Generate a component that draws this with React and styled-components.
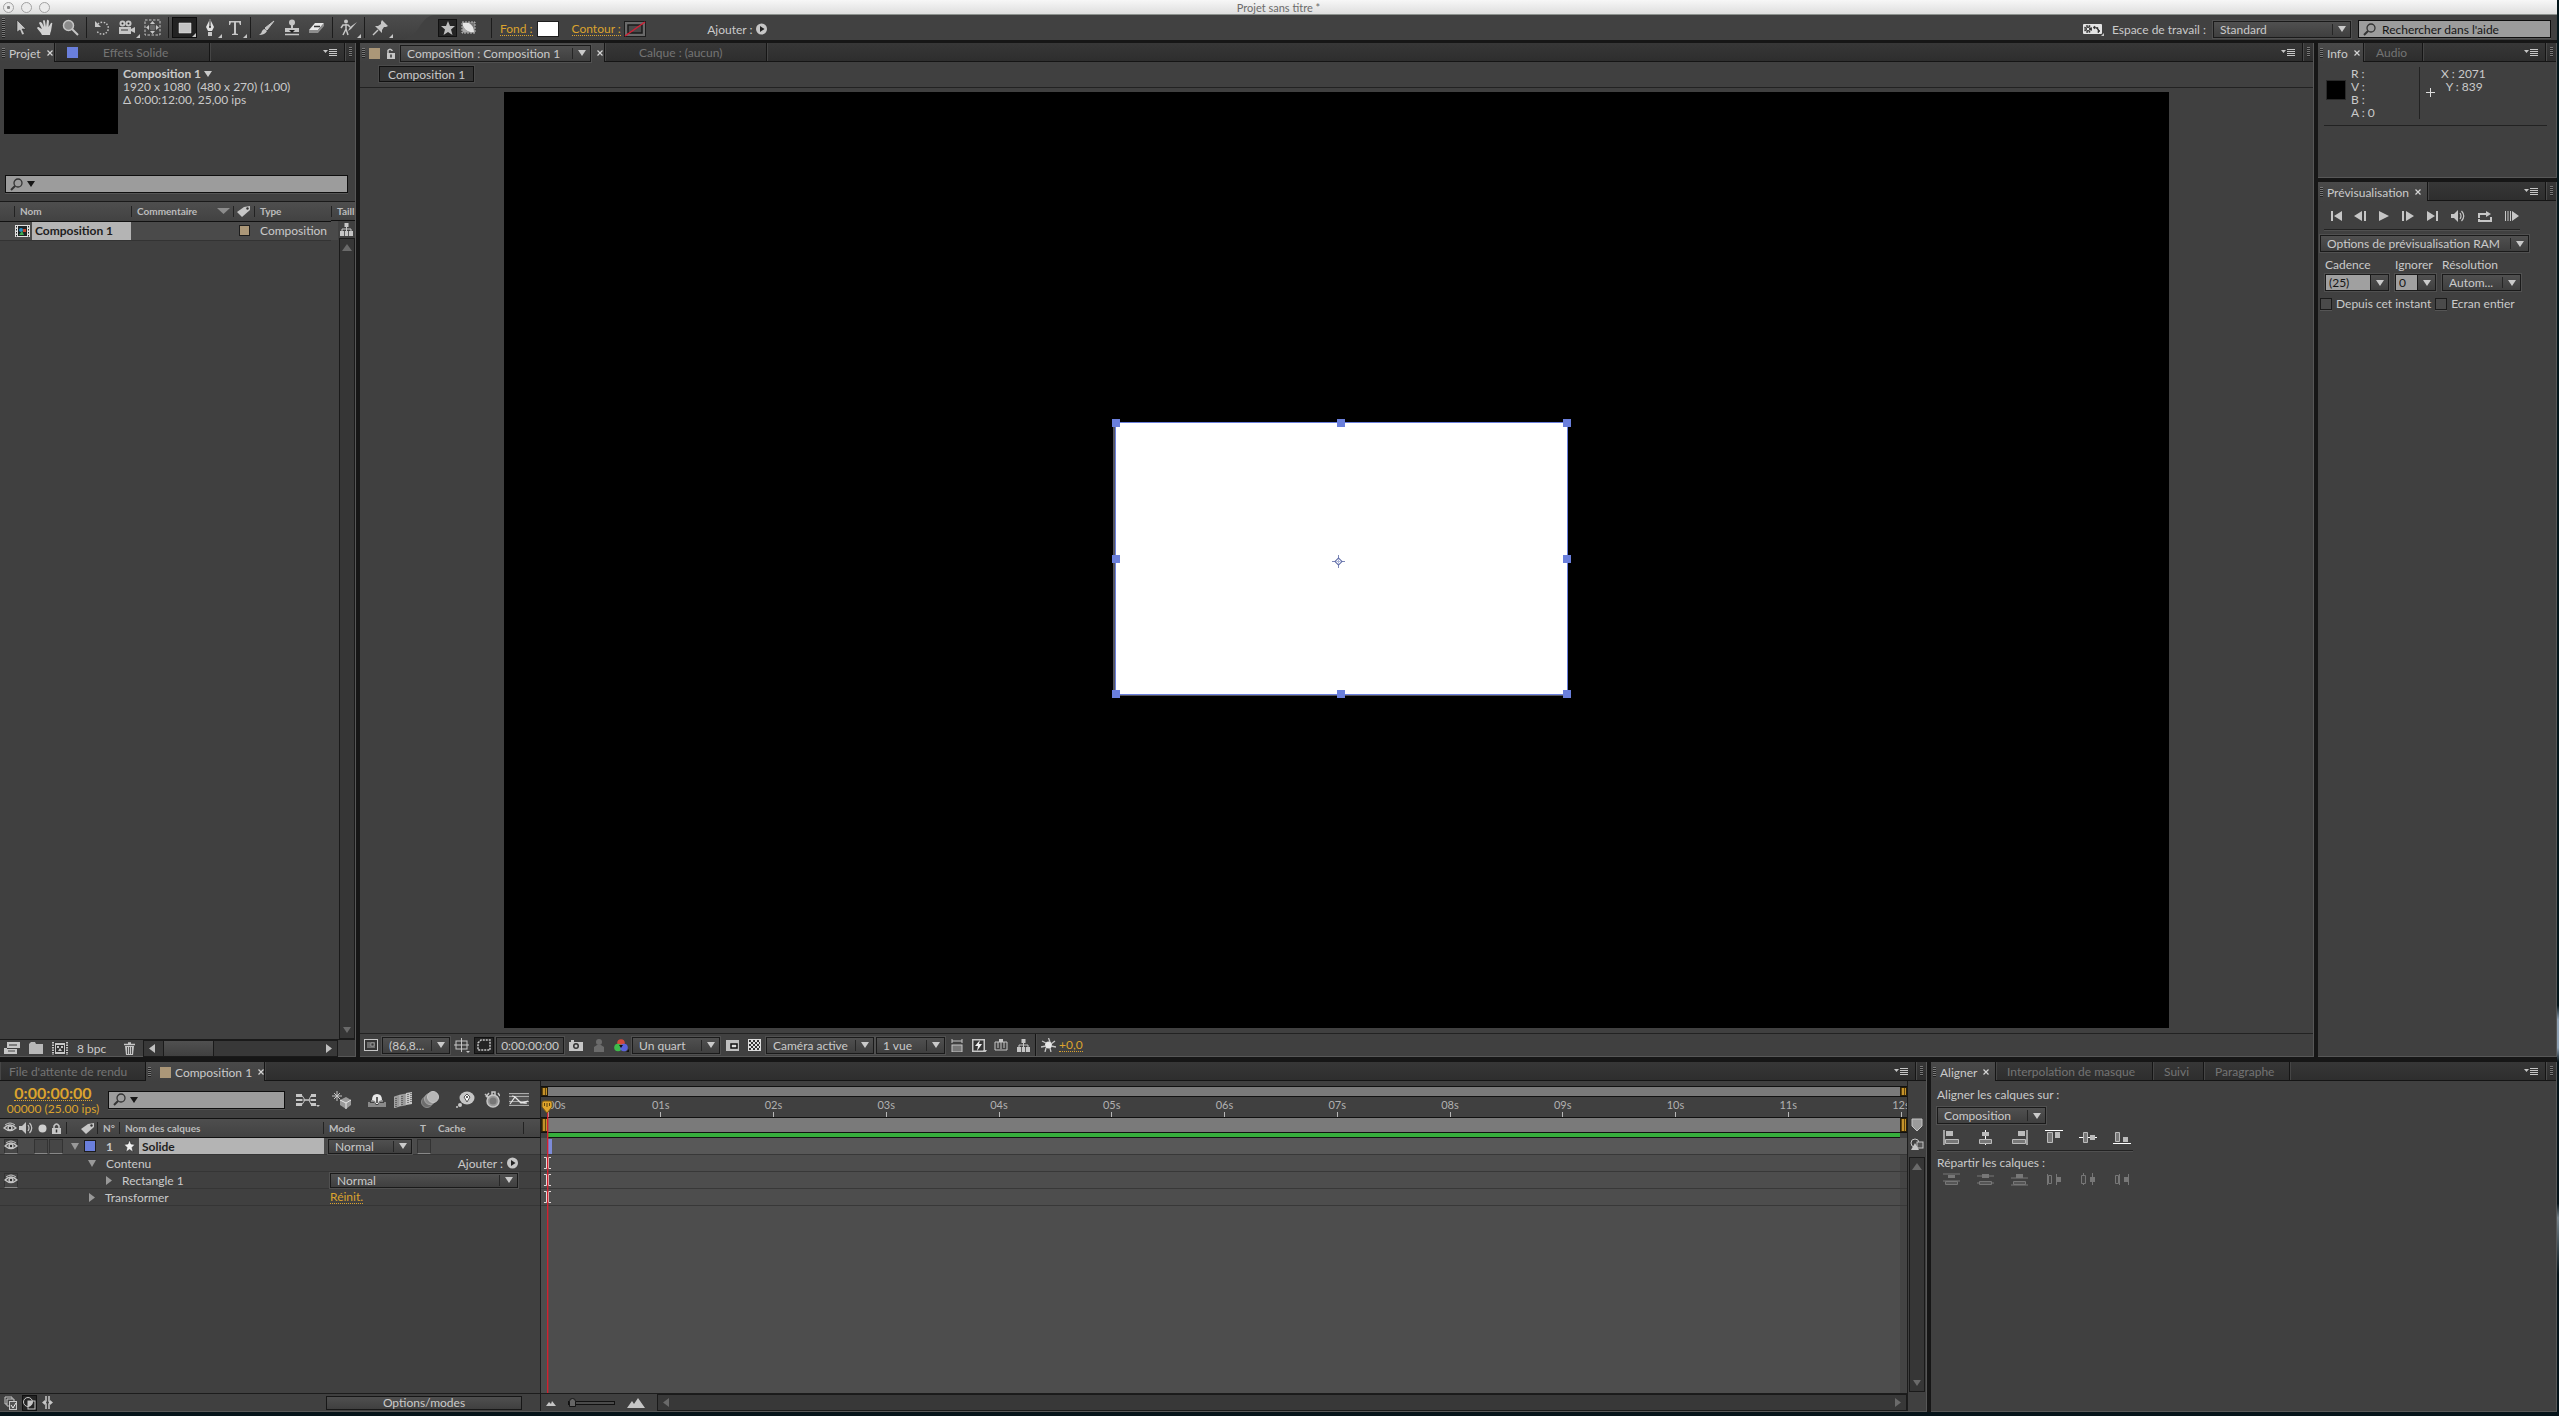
import React from 'react';
import styled, { createGlobalStyle, css } from 'styled-components';

const GlobalStyle = createGlobalStyle`
  * {
    box-sizing: border-box;
  }

  body {
    margin: 0;
    background: #05090b;
    color: #cacaca;
    font-family: Lato, 'Open Sans', sans-serif;
    font-size: 12px;
    line-height: 13px;
    overflow: hidden;
  }

  button,
  input,
  select {
    margin: 0;
    padding: 0;
    border: 0;
    border-radius: 0;
    outline: 0;
    background: none;
    color: inherit;
    font: inherit;
  }

  svg {
    display: block;
    flex: none;
  }
`;

/* ---------- icons ---------- */

const L = '#c6c6c6';
const D = '#2c2c2c';

const icons = {
  arrow: [12, 17, <path d="M2 1L11 10H7L9.500 15L7 16L5 11L2 13Z" fill={L} stroke="#222" strokeWidth=".5" />],
  hand: [17, 17, (
    <path
      d="M5 16C4 13 1 11 0 9Q1 7 3 9L5 10L2 4Q3 2 5 4L7 8L6 2Q7 0 8 2L9 8L10 1Q11 0 12 2L11.500 8L14 4Q16 3 15 6L14 12Q13 14 13 16Z"
      fill="#d2d2d2"
    />
  )],
  zoom: [17, 17, (
    <>
      <circle cx="6.500" cy="6.500" r="5" fill="#8b8b8b" stroke={L} strokeWidth="1.500" />
      <path d="M10 10L16 16" stroke={L} strokeWidth="2" />
    </>
  )],
  rotate: [17, 16, (
    <>
      <path d="M4 4A6 6 0 1 1 3 11" fill="none" stroke={L} strokeWidth="1.500" strokeDasharray="1.500 1.500" />
      <path d="M1 1V7H7Z" fill={L} />
    </>
  )],
  camera: [19, 16, (
    <>
      <circle cx="4.500" cy="3.500" r="3" fill={L} />
      <circle cx="10.500" cy="3.500" r="3" fill={L} />
      <circle cx="4.500" cy="3.500" r="1" fill={D} />
      <circle cx="10.500" cy="3.500" r="1" fill={D} />
      <path d="M1 7H13V9L17 7V13L13 11V14H1Z" fill={L} />
      <path d="M3 10H10" stroke="#666" strokeWidth="1.500" />
    </>
  )],
  panBehind: [17, 17, (
    <>
      <rect x="1" y="1" width="15" height="15" fill="none" stroke={L} strokeDasharray="2.500 1.500" />
      <circle cx="8.500" cy="8.500" r="3" fill="#666" />
      <path d="M8.500 2L11 5H6ZM8.500 15L11 12H6ZM2 8.500L5 6V11ZM15 8.500L12 6V11Z" fill={L} />
    </>
  )],
  rect: [14, 12, <path d="M1 1H13V11H1Z" fill="#c4c4c4" stroke="#eee" strokeWidth=".5" />],
  pen: [12, 17, (
    <>
      <path d="M6 0L10 8L8 12H4L2 8Z" fill="#e0e0e0" />
      <path d="M6 1V8" stroke={D} />
      <circle cx="6" cy="8" r="1" fill={D} />
      <path d="M4 13H8V17H4Z" fill={L} />
    </>
  )],
  type: [14, 16, <path d="M1 1H13V5H12L11 2.500H8V13.500L10 14V15H4V14L6 13.500V2.500H3L2 5H1Z" fill={L} />],
  brush: [17, 16, (
    <>
      <path d="M16 1L9 10L7 8Z" fill={L} stroke={L} />
      <path d="M7 9L9 11Q7 15 1 15Q4 13 4 11Q5 9 7 9Z" fill={L} />
    </>
  )],
  stamp: [16, 17, (
    <>
      <circle cx="8" cy="3.500" r="3" fill={L} />
      <path d="M7 6H9V9H7ZM1 9H15V13H1Z" fill={L} />
      <path d="M5 11H11L8 14Z" fill="#222" />
      <path d="M1 15.500H15" stroke={L} strokeWidth="1.500" />
    </>
  )],
  eraser: [17, 13, (
    <>
      <path d="M7 2H16L10 9H1Z" fill="#e8e8e8" />
      <path d="M1 9H10V12H1ZM10 9L16 2V5L10 12Z" fill="#8d8d8d" />
      <path d="M6 5.500H12" stroke="#333" strokeWidth="1.500" />
    </>
  )],
  roto: [19, 17, (
    <>
      <circle cx="7" cy="2.500" r="2" fill={L} />
      <path d="M7 5V10L9 16M7 10L4 16M2 9L4 6H9L11 8" fill="none" stroke={L} strokeWidth="1.500" />
      <path d="M18 3L12 10L9 12L11 8Z" fill={L} />
    </>
  )],
  pin: [17, 17, (
    <>
      <path d="M10 1L16 7L14 8L12 8L10 11V14L3 7H6L9 5V3Z" fill={L} />
      <path d="M6 11L1 16" stroke={L} strokeWidth="1.500" />
    </>
  )],
  star: [14, 14, <path d="M7 0L9 5L14 5L10 8.500L11.500 14L7 11L2.500 14L4 8.500L0 5L5 5Z" fill="#bdbdbd" />],
  maskMode: [15, 13, (
    <>
      <rect x="1" y="1" width="13" height="11" fill="#777" stroke="#bbb" strokeDasharray="2 1" />
      <path d="M2 2H8Q13 5 13 11Q5 12 2 5Z" fill="#e6e6e6" />
      <path d="M2 11V5Q4 10 9 11Z" fill="#aaa" />
    </>
  )],
  noStroke: [22, 16, (
    <>
      <rect x=".5" y=".5" width="21" height="15" fill="#6a6a6a" stroke="#1d1d1d" />
      <rect x="4" y="4" width="14" height="8" fill="#4a4a4a" stroke="#1a1a1a" strokeWidth="1.500" />
      <path d="M1 15L21 1" stroke="#d21f35" strokeWidth="1.500" />
    </>
  )],
  playCircle: [11, 12, (
    <>
      <circle cx="5.500" cy="6" r="5.500" fill={L} />
      <path d="M4 3L8.500 6L4 9Z" fill="#222" />
    </>
  )],
  gears: [22, 15, (
    <>
      <rect x="0" y="2" width="19" height="10" rx="1" fill="#e4e4e4" />
      <circle cx="5" cy="7" r="3" fill="none" stroke="#333" strokeWidth="2" strokeDasharray="1.500 .9" />
      <circle cx="5" cy="7" r="1.800" fill="none" stroke="#333" />
      <path d="M10 5.500L12 4V7ZM12 5.500H15V8M17 9L15 11V7Z" fill="#333" stroke="#333" strokeWidth=".6" />
      <path d="M18 14L21 14V11Z" fill={L} />
    </>
  )],
  loupe: [13, 13, (
    <>
      <circle cx="8" cy="5" r="4" fill="none" stroke="#333" strokeWidth="1.300" />
      <path d="M5 8L1 12" stroke="#333" strokeWidth="2" />
    </>
  )],
  down: [8, 6, <path d="M0 0H8L4 6Z" fill="currentColor" />],
  sort: [13, 6, <path d="M0 0H13L6.500 6Z" fill="#8c8c8c" />],
  up: [10, 7, <path d="M0 7H10L5 0Z" fill="currentColor" />],
  right: [6, 9, <path d="M0 0L6 4.500L0 9Z" fill="currentColor" />],
  left: [6, 9, <path d="M6 0L0 4.500L6 9Z" fill="currentColor" />],
  close: [6, 6, <path d="M.5 .5L5.500 5.500M5.500 .5L.5 5.500" stroke="#d5d5d5" strokeWidth="1.200" />],
  menu: [14, 9, (
    <>
      <path d="M0 2H5L2.500 5Z" fill={L} />
      <path d="M6 1.500H14M6 3.500H14M6 5.500H14M6 7.500H14" stroke={L} />
    </>
  )],
  lock: [9, 11, (
    <>
      <path d="M2 6V2.500Q4 0 6 2.500V3" fill="none" stroke={L} strokeWidth="1.500" />
      <rect x="1" y="5" width="8" height="6" fill={L} />
      <path d="M5 6.500V9.500" stroke="#333" strokeWidth="1.500" />
    </>
  )],
  padlock: [9, 11, (
    <>
      <path d="M2 5V3Q4.500-1 7 3V5" fill="none" stroke={L} strokeWidth="1.500" />
      <rect x="0" y="5" width="9" height="6" fill={L} />
      <path d="M4.500 6.500V9.500" stroke="#333" strokeWidth="1.500" />
    </>
  )],
  tag: [15, 13, (
    <>
      <path d="M1 7L8 2L14 1V5L6 12Z" fill={L} />
      <circle cx="11.500" cy="3.500" r="1.200" fill="#333" />
    </>
  )],
  comp: [15, 12, (
    <>
      <rect width="15" height="12" fill="#e0e0e0" />
      <path d="M1.500 1V12M13.500 1V12" stroke="#222" strokeDasharray="1.500 1.500" />
      <rect x="3" y="1" width="9" height="10" fill="#1e2426" />
      <circle cx="6" cy="5" r="2" fill="#2d8fc4" />
      <rect x="8" y="4" width="3" height="3" fill="#c4472d" />
      <path d="M4 10L7 6L9 10Z" fill="#3cab4f" />
    </>
  )],
  tree: [13, 13, (
    <>
      <path d="M4.500 0H8.500V4H4.500ZM0 8H4V13H0ZM4.800 8H8.200V13H4.800ZM9 8H13V13H9Z" fill={L} />
      <path d="M6.500 4V8M2 8V6H11V8" fill="none" stroke={L} />
    </>
  )],
  footage: [17, 13, (
    <>
      <path d="M4 0H17V6H4Z" fill={L} />
      <path d="M6 3H14" stroke="#333" />
      <path d="M1 6H4V12H1ZM3 7H14V12H3Z" fill={L} />
      <path d="M5 9H12" stroke="#444" />
    </>
  )],
  folder: [14, 12, <path d="M0 2L2 0H6L7 2H14V12H0Z" fill="#b8b8b8" />],
  newComp: [16, 13, (
    <>
      <rect width="16" height="13" fill="#333" />
      <path d="M1 0V13M15 0V13" stroke={L} strokeWidth="2" strokeDasharray="1.500 1" />
      <rect x="3" y="1" width="10" height="11" fill={L} />
      <rect x="4" y="3" width="8" height="7" fill="#333" />
      <path d="M5 4H7V6H5ZM9 4H11V6H9ZM6 9L8 6L10 9Z" fill={L} />
    </>
  )],
  trash: [11, 13, (
    <>
      <path d="M0 2.500H11M4 1H7" stroke={L} strokeWidth="1.500" />
      <path d="M1 4H10L9 13H2Z" fill={L} />
      <path d="M3.500 5V12M5.500 5V12M7.500 5V12" stroke="#555" />
    </>
  )],
  magFit: [14, 12, (
    <>
      <rect x=".5" y=".5" width="13" height="11" fill="#333" stroke={L} />
      <path d="M3 3H11V9H3Z" fill="#6d6d6d" />
      <path d="M7 4H10V7H7Z" fill="#333" stroke={L} strokeWidth=".5" />
    </>
  )],
  guides: [16, 15, (
    <>
      <rect x="2" y="3" width="11" height="8" fill="none" stroke={L} />
      <path d="M7.500 0V14M0 7H15" stroke={L} />
      <path d="M12 13H16L14 15Z" fill={L} />
    </>
  )],
  maskView: [14, 12, <path d="M1 4L4 1H13V11H1Z" fill="none" stroke={L} strokeWidth="1.500" strokeDasharray="2 1" />],
  snapshot: [14, 11, (
    <>
      <path d="M0 2H2V0H5V2H14V11H0Z" fill={L} />
      <circle cx="7" cy="6" r="3" fill="#333" />
      <circle cx="7" cy="6" r="1.500" fill={L} />
    </>
  )],
  person: [10, 13, (
    <>
      <circle cx="5" cy="3" r="3" fill="#6b6b6b" />
      <path d="M0 13V8L3 6H7L10 8V13Z" fill="#6b6b6b" />
    </>
  )],
  rgb: [15, 13, (
    <>
      <circle cx="7" cy="4" r="3.800" fill="#d14a3e" />
      <circle cx="4" cy="8.500" r="3.800" fill="#3dbb4a" />
      <circle cx="10" cy="8.500" r="3.800" fill="#5a62dc" />
      <path d="M5 6H9L7 9Z" fill="#111" />
      <path d="M12 13L15 13V10Z" fill="#111" />
    </>
  )],
  roi: [13, 11, (
    <>
      <rect width="13" height="11" fill="#c0c0c0" />
      <rect x="5" y="4" width="6" height="4" fill="#ddd" stroke="#111" strokeWidth="1.500" />
    </>
  )],
  checker: [13, 12, (
    <>
      <rect width="13" height="12" fill="#ddd" />
      <path d="M1 2H12M1 6H12M1 10H12" stroke="#333" strokeWidth="2" strokeDasharray="2 2" />
      <path d="M3 4H12M3 8H12" stroke="#333" strokeWidth="2" strokeDasharray="2 2" />
    </>
  )],
  aspect: [12, 13, (
    <>
      <path d="M1 0V4M11 0V4M1 2H11" stroke={L} />
      <rect x="1" y="6" width="10" height="7" fill="#777" stroke={L} />
    </>
  )],
  fast: [15, 13, (
    <>
      <rect width="13" height="13" fill={L} />
      <rect x="1.500" y="1.500" width="10" height="10" fill="#333" />
      <path d="M8 1L3 7H6L5 12L10 5H7Z" fill="#eee" />
      <path d="M11 11H15L13 14Z" fill={L} />
    </>
  )],
  timelineIcon: [14, 12, (
    <>
      <path d="M1 11V3H13V11H1M4 3V9M7 1V10M10 3V9" fill="none" stroke={L} />
      <path d="M5 0H9V3H5Z" fill={L} />
    </>
  )],
  exposure: [15, 14, (
    <>
      <circle cx="7.500" cy="7" r="3.500" fill="#e8e8e8" />
      <path d="M7.500 0L9 4M14 3L10 6M15 9L10 8M10 14L9 10M4 14L5 10M0 9L5 8M1 3L5 5" stroke={L} strokeWidth="1.300" />
    </>
  )],
  first: [11, 10, <path d="M0 0H2V10H0ZM11 0V10L3 5Z" fill={L} />],
  prev: [12, 10, <path d="M8 0V10L0 5ZM10 0H12V10H10Z" fill={L} />],
  play: [10, 10, <path d="M0 0L10 5L0 10Z" fill={L} />],
  next: [12, 10, <path d="M0 0H2V10H0ZM4 0L12 5L4 10Z" fill={L} />],
  last: [11, 10, <path d="M0 0L8 5L0 10ZM9 0H11V10H9Z" fill={L} />],
  speaker: [14, 12, (
    <>
      <path d="M0 4H3L7 0V12L3 8H0Z" fill={L} />
      <path d="M9 3Q11 6 9 9M10.500 1Q15 6 10.500 11" fill="none" stroke={L} strokeWidth="1.200" />
    </>
  )],
  loop: [14, 11, (
    <>
      <path d="M1 7V3H9M13 6V10H1V8" fill="none" stroke={L} strokeWidth="2" />
      <path d="M8 0L13 3L8 6Z" fill={L} />
    </>
  )],
  ram: [14, 10, <path d="M0 0H1V10H0ZM2.500 0H3.500V10H2.500ZM5 0H6V10H5ZM7 0L14 5L7 10Z" fill={L} />],
  eye: [14, 12, (
    <>
      <path d="M1 6Q7 0 13 6Q7 11 1 6Z" fill="none" stroke={L} strokeWidth="1.300" />
      <path d="M2 3Q7-1 12 3" fill="none" stroke={L} />
      <circle cx="7" cy="6" r="2.600" fill={L} />
      <circle cx="7" cy="6" r="1.200" fill={D} />
    </>
  )],
  dot: [9, 9, <circle cx="4.500" cy="4.500" r="4" fill="#d0d0d0" />],
  flowchart: [24, 14, (
    <>
      <path d="M0 1H6V4H0ZM0 6H6V8H0ZM0 10H6V13H0ZM15 1H20V4H15ZM15 6H20V8H15ZM15 10H20V13H15Z" fill={L} />
      <path d="M6 2.500L9 7H13L15 2.500M6 7H15M6 11.500L9 7M13 7L15 11.500" fill="none" stroke={L} />
      <path d="M20 12H24L22 14Z" fill={L} />
    </>
  )],
  draft3d: [20, 18, (
    <>
      <path d="M5 0V10M0 5H10M2 2L8 8M8 2L2 8" stroke={L} />
      <path d="M8 9L14 6L19 9V14L14 18L8 14Z" fill="#9a9a9a" />
      <path d="M8 9L14 12L19 9M14 12V18" stroke="#e5e5e5" fill="none" />
    </>
  )],
  shy: [18, 14, (
    <>
      <path d="M0 7H18V14H0Z" fill="#8a8a8a" />
      <path d="M0 7H3V9H6L8 12H10L12 9H15V7H18V9H16V10H2V9H0Z" fill="#444" />
      <path d="M4 7Q4 1 9 1Q14 1 14 7L11 8L10 11H8L7 8Z" fill="#e8e8e8" />
      <path d="M9 4V10" stroke="#333" strokeWidth="1.500" />
    </>
  )],
  blend: [19, 16, (
    <>
      <path d="M0 5L6 3V14L0 16ZM6 3L12 2V13L6 14Z" fill="#999" stroke={L} strokeWidth=".5" />
      <path d="M12 1L18 0V12L12 13Z" fill={L} />
      <path d="M2 6V15M8 4V13M14 2V12M17 1V11" stroke="#333" strokeDasharray="1 1" />
    </>
  )],
  blur: [18, 17, (
    <>
      <circle cx="6" cy="11" r="5.500" fill="#6d6d6d" stroke="#8a8a8a" />
      <circle cx="9" cy="8" r="5.500" fill="#8d8d8d" stroke="#a8a8a8" />
      <circle cx="12" cy="6" r="5.500" fill="#b6b6b6" stroke={L} />
    </>
  )],
  brain: [20, 17, (
    <>
      <ellipse cx="12" cy="7" rx="7.500" ry="6.500" fill={L} />
      <circle cx="5" cy="14" r="2" fill={L} />
      <circle cx="2" cy="16" r="1" fill={L} />
      <path d="M12 3L15 6L12 11L9 6Z" fill="#fff" stroke="#555" />
      <circle cx="12" cy="6" r="1" fill="#333" />
    </>
  )],
  stopwatch: [16, 17, (
    <>
      <circle cx="9" cy="10" r="6" fill="#999" stroke={L} strokeWidth="1.500" />
      <circle cx="9" cy="10" r="3.500" fill="#777" />
      <path d="M8 4V1H11V4M1 3L5 7M5 2L2 6M14 2L16 5" stroke={L} strokeWidth="1.500" fill="none" />
    </>
  )],
  graph: [20, 15, (
    <>
      <rect x="0" y="1" width="20" height="13" fill="#555" />
      <path d="M0 1.500H20M0 13.500H20M0 4.500H20M0 9.500H20" stroke="#aaa" />
      <path d="M1 12L6 5L12 11L19 9M3 4Q6 4 9 8T18 11" fill="none" stroke="#e6e6e6" strokeWidth="1.200" />
    </>
  )],
  twirlOpen: [8, 7, <path d="M0 0H8L4 7Z" fill="#999" />],
  twirl: [6, 9, <path d="M0 0L6 4.500L0 9Z" fill="#999" />],
  starSmall: [11, 12, <path d="M5.500 0L7 4L11 4.500L8 7.500L9 12L5.500 9.500L2 12L3 7.500L0 4.500L4 4Z" fill="#eee" stroke="#222" strokeWidth=".5" />],
  ibeam: [7, 12, <path d="M0 .5H2.500V11.500H0M7 .5H4.500V11.500H7" fill="none" stroke="#e3d9d9" />],
  marker: [12, 14, <path d="M1 1H11V8L6 13L1 8Z" fill="#9b9b9b" stroke="#c4c4c4" />],
  compButton: [14, 13, (
    <>
      <circle cx="5" cy="5" r="4" fill="none" stroke={L} />
      <rect x="7" y="4" width="6" height="6" fill="#555" stroke={L} />
      <path d="M1 12L5 5L9 12Z" fill={L} />
    </>
  )],
  layersSwitch: [13, 14, (
    <>
      <path d="M1 1H8V3M1 1V8H3M3 3H10V5M3 3V10H5" fill="none" stroke={L} />
      <rect x="5.500" y="5.500" width="7" height="8" fill="#555" stroke={L} />
      <path d="M7 9L9 12L12 7" fill="none" stroke="#eee" />
    </>
  )],
  modesSwitch: [13, 14, (
    <>
      <circle cx="5" cy="6" r="4.500" fill="none" stroke={L} />
      <rect x="5" y="5" width="7" height="8" fill="none" stroke={L} />
      <path d="M5 5H9Q10 8 7 10H5Z" fill={L} />
    </>
  )],
  braces: [11, 13, (
    <>
      <path d="M4 0V5L3 6.500L4 8V13M7 0V5L8 6.500L7 8V13" fill="none" stroke={L} strokeWidth="1.500" />
      <path d="M0 6.500L3 4V9ZM11 6.500L8 4V9Z" fill={L} />
    </>
  )],
  hillSmall: [10, 6, <path d="M0 6L3 2L5 4L6 1L10 6Z" fill={L} />],
  hillBig: [18, 10, <path d="M0 10L5 3L7 6L11 0L18 10Z" fill={L} />],
};

const alignShapes = {
  left: (<><path d="M1 0V15" stroke="#fff" /><path d="M3 1H10V6H3Z" fill="#bbb" /><path d="M2.500 9.500H15.500V13.500H2.500Z" fill="#777" stroke="#bbb" /></>),
  centerH: (<><path d="M8.500 0V15" stroke="#fff" /><path d="M5 2H12V6H5Z" fill="#bbb" /><path d="M2.500 9.500H14.500V13.500H2.500Z" fill="#777" stroke="#bbb" /></>),
  right: (<><path d="M16 0V15" stroke="#fff" /><path d="M7 1H14V6H7Z" fill="#bbb" /><path d="M1.500 9.500H14.500V13.500H1.500Z" fill="#777" stroke="#bbb" /></>),
  top: (<><path d="M0 .5H18" stroke="#fff" /><path d="M2.500 2.500H7.500V12.500H2.500Z" fill="#777" stroke="#bbb" /><path d="M10 2H15V8H10Z" fill="#bbb" /></>),
  centerV: (<><path d="M0 7.500H18" stroke="#fff" /><path d="M4.500 2.500H8.500V12.500H4.500Z" fill="#777" stroke="#bbb" /><path d="M11 5H16V10H11Z" fill="#bbb" /></>),
  bottom: (<><path d="M0 13.500H18" stroke="#fff" /><path d="M2.500 2.500H6.500V11.500H2.500Z" fill="#777" stroke="#bbb" /><path d="M10 7H15V12H10Z" fill="#bbb" /></>),
};

const spreadShapes = {
  top: (<><path d="M0 1H17M0 8H17" stroke="#777" /><path d="M5 2H12V5H5Z" fill="#777" /><path d="M2.500 8.500H14.500V11.500H2.500Z" fill="#555" stroke="#777" /></>),
  middle: (<><path d="M0 3H17M0 10H17" stroke="#777" /><path d="M5 1H12V5H5Z" fill="#777" /><path d="M2.500 8.500H14.500V11.500H2.500Z" fill="#555" stroke="#777" /></>),
  bottom: (<><path d="M0 5H17M0 12H17" stroke="#777" /><path d="M5 1H12V5H5Z" fill="#777" /><path d="M2.500 8.500H14.500V11.500H2.500Z" fill="#555" stroke="#777" /></>),
  left: (<><path d="M2.500 1V12M11.500 1V12" stroke="#777" /><path d="M3.500 2.500H6.500V10.500H3.500Z" fill="#444" stroke="#777" /><path d="M12 4H16V9H12Z" fill="#777" /></>),
  center: (<><path d="M4.500 0V12M13.500 0V12" stroke="#777" /><path d="M2.500 2.500H6.500V10.500H2.500Z" fill="#444" stroke="#777" /><path d="M11 4H16V9H11Z" fill="#777" /></>),
  right: (<><path d="M6.500 1V12M15.500 1V12" stroke="#777" /><path d="M2.500 2.500H5.500V10.500H2.500Z" fill="#444" stroke="#777" /><path d="M11 4H15V9H11Z" fill="#777" /></>),
};

const Icon = ({ name }) => {
  const [w, h, art] = icons[name];
  return (
    <svg width={w} height={h} viewBox={`0 0 ${w} ${h}`} aria-hidden='true'>
      {art}
    </svg>
  );
};

/* ---------- shared parts ---------- */

const Row = styled.div`
  display: flex;
  align-items: center;
  gap: ${(props) => props.$gap || 0}px;
`;

const Spacer = styled.div`
  flex: 1;
`;

const Gap = styled.span`
  flex: none;
  width: ${(props) => props.$w || 1}px;
`;

const Swatch = styled.span`
  flex: none;
  width: ${(props) => props.$size || 11}px;
  height: ${(props) => props.$size || 11}px;
  background: ${(props) => props.$color};
  border: ${(props) => (props.$framed ? '1px solid #1d1d1d' : 'none')};
`;

const Grip = styled.span`
  flex: none;
  width: 3px;
  height: ${(props) => props.$tall || 10}px;
  background: repeating-linear-gradient(#7a7a7a 0 1px, #222 1px 2px);
`;

const IconButton = styled.button`
  display: flex;
  align-items: center;
  justify-content: center;
  flex: none;
  width: ${(props) => props.$w || 16}px;
  height: ${(props) => props.$h || 17}px;

  ${(props) =>
    props.$active &&
    css`
      background: #242424;
      border: 1px solid #111;
    `}
`;

const Panel = styled.section`
  display: flex;
  flex-direction: column;
  min-width: 0;
  min-height: 0;
  background: #404040;
  border-right: 1px solid #575757;
  border-bottom: 1px solid #575757;
`;

const TabBar = styled.div`
  display: flex;
  flex: none;
  height: 19px;
  background: linear-gradient(#373737, #2d2d2d);
`;

const Tab = styled.div`
  display: flex;
  align-items: center;
  gap: ${(props) => props.$gap || 4}px;
  flex: none;
  width: ${(props) => props.$w}px;
  padding: 1px 4px 0 ${(props) => props.$pad || 2}px;
  white-space: nowrap;
  border-right: 1px solid #151515;

  ${(props) =>
    props.$active
      ? css`
          background: linear-gradient(#4a4a4a, #404040);
        `
      : css`
          color: #747474;
          border-bottom: 1px solid #151515;
          box-shadow: inset 1px 0 #454545;
        `}
`;

const TabFill = styled.div`
  display: flex;
  flex: 1;
  align-items: center;
  justify-content: flex-end;
  gap: 3px;
  padding-right: 3px;
  border-bottom: 1px solid #151515;
  box-shadow: inset 1px 0 #454545;

  & button {
    margin-right: 4px;
  }
`;

const TabSplit = styled.span`
  width: 2px;
  height: 100%;
  background: linear-gradient(90deg, #151515 50%, #4a4a4a 50%);
`;

const PanelMenu = () => (
  <TabFill>
    <IconButton $w={14} $h={14} aria-label='Menu du panneau'>
      <Icon name='menu' />
    </IconButton>
    <TabSplit />
    <Grip />
  </TabFill>
);

const CloseButton = () => (
  <IconButton $w={10} $h={12} aria-label='Fermer'>
    <Icon name='close' />
  </IconButton>
);

const SelectBox = styled.div`
  display: grid;
  flex: none;
  width: ${(props) => props.$w}px;
  height: ${(props) => props.$h || 17}px;
  background: linear-gradient(#505050, #3f3f3f);
  border: 1px solid #1a1a1a;
  box-shadow: 0 0 0 1px #505050;

  & select {
    grid-area: 1 / 1;
    width: 100%;
    padding: 0 18px 0 6px;
    appearance: none;
    text-overflow: ellipsis;
  }
`;

const SelectArrow = styled.span`
  grid-area: 1 / 1;
  justify-self: end;
  align-self: center;
  display: flex;
  align-items: center;
  justify-content: center;
  width: 18px;
  height: 11px;
  border-left: 1px solid #262626;
  pointer-events: none;
`;

const Dropdown = ({ label, value, w, h }) => (
  <SelectBox $w={w} $h={h}>
    <select aria-label={label} defaultValue={value}>
      <option>{value}</option>
    </select>
    <SelectArrow>
      <Icon name='down' />
    </SelectArrow>
  </SelectBox>
);

const ComboBox = styled.div`
  display: flex;
  width: ${(props) => props.$w}px;
  height: 17px;
  border: 1px solid #1a1a1a;
  background: linear-gradient(#505050, #3f3f3f);
  box-shadow: 0 0 0 1px #505050;

  & input {
    flex: 1;
    min-width: 0;
    padding-left: 3px;
    background: #a0a0a0;
    color: #151515;
    border-right: 1px solid #1a1a1a;
  }
`;

const SearchBox = styled.div`
  display: flex;
  align-items: center;
  gap: 4px;
  flex: ${(props) => (props.$w ? 'none' : 1)};
  width: ${(props) => (props.$w ? `${props.$w}px` : 'auto')};
  height: 18px;
  padding-left: 4px;
  background: #9c9c9c;
  border: 1px solid #0e0e0e;
  box-shadow: 0 1px #555;
  color: #161616;

  & input {
    flex: 1;
    min-width: 0;
    padding-left: 2px;
  }

  & input::placeholder {
    color: #161616;
    opacity: 1;
  }
`;

const HotText = styled.button`
  color: #dba32e;
  border-bottom: 1px dotted #dba32e;
  white-space: nowrap;
`;

const HairLine = styled.hr`
  width: ${(props) => props.$w}px;
  max-width: 100%;
  margin: ${(props) => props.$m || '0'};
  border: 0;
  border-top: 1px solid #222;
  border-bottom: 1px solid #505050;
`;

/* ---------- window ---------- */

const Desktop = styled.div`
  height: 100vh;
  padding: 0 2px 4px 0;
  background: linear-gradient(#04161b 71%, #8da0b3 72% 74%, #06141a 75% 85%, #76848c 86%, #06141a 90%);
`;

const Window = styled.div`
  display: flex;
  flex-direction: column;
  height: 100%;
  background: #161616;
`;

const TitleBar = styled.header`
  display: grid;
  grid-template-columns: 1fr auto 1fr;
  align-items: center;
  flex: none;
  height: 15px;
  padding: 0 3px;
  background: linear-gradient(#f7f7f7, #dedede);
  border-bottom: 1px solid #8c918d;
  color: #6b6b6b;
  font-size: 11px;
`;

const Light = styled.button`
  width: 11px;
  height: 11px;
  border: 1px solid #a2a2a2;
  border-radius: 50%;
  background: ${(props) => (props.$edited ? 'radial-gradient(#888 20%, #ececec 30%)' : '#ececec')};
`;

const Toolbar = styled.div`
  display: flex;
  align-items: center;
  flex: none;
  height: 25px;
  margin-bottom: 3px;
  padding-right: 6px;
  background: #414141;
`;

const ToolGroup = styled.div`
  display: flex;
  align-items: center;
  height: 100%;
  padding-left: 2px;
  background: linear-gradient(#4c4c4c, #3f3f3f);
`;

const ToolSet = styled.div`
  display: flex;
  align-items: center;
  height: 21px;
  border-left: ${(props) => (props.$first ? 'none' : '1px solid #1c1c1c')};
  padding: 0 3px;
`;

const Tool = styled.button`
  display: grid;
  place-items: center;
  width: 25px;
  height: 21px;
  background: ${(props) => (props.$active ? '#222' : 'none')};
  border: ${(props) => (props.$active ? '1px solid #0d0d0d' : 'none')};

  & > * {
    grid-area: 1 / 1;
  }
`;

const Corner = styled.span`
  place-self: end;
  width: 0;
  height: 0;
  border-left: 4px solid transparent;
  border-bottom: 4px solid #c6c6c6;
`;

const ShapeOptions = styled.div`
  display: flex;
  align-items: center;
  gap: 3px;
  height: 20px;
  padding-right: 15px;
  margin-right: 8px;
  border-right: 1px solid #1c1c1c;
`;

const ToolOptions = styled.div`
  display: flex;
  align-items: center;
  flex: 1;
  padding-top: 3px;
`;

const FillColor = styled.button`
  width: 22px;
  height: 16px;
  margin: 0 13px 0 4px;
  background: #fff;
  border: 1px solid #1d1d1d;
`;

const toolSets = [
  ['arrow', 'hand', 'zoom'],
  ['rotate', 'camera', 'panBehind'],
  ['rect', 'pen', 'type'],
  ['brush', 'stamp', 'eraser'],
  ['roto'],
  ['pin'],
];

const flyouts = ['camera', 'rect', 'pen', 'type', 'roto', 'pin'];

const ToolStrip = () => (
  <Toolbar>
    <ToolGroup>
      <Grip $tall={20} />
      {toolSets.map((set, i) => (
        <ToolSet key={set[0]} $first={i === 0}>
          {set.map((name) => (
            <Tool key={name} $active={name === 'rect'} aria-label={name}>
              <Icon name={name} />
              {flyouts.includes(name) && <Corner />}
            </Tool>
          ))}
        </ToolSet>
      ))}
    </ToolGroup>
    <svg width='42' height='25' viewBox='0 0 42 25' aria-hidden='true'>
      <defs>
        <linearGradient id='edge' x2='0' y2='1'>
          <stop stopColor='#4c4c4c' />
          <stop offset='1' stopColor='#3f3f3f' />
        </linearGradient>
      </defs>
      <path d='M0 0H38C22 2 24 25 4 25H0Z' fill='url(#edge)' />
    </svg>
    <ShapeOptions>
      <IconButton $w={19} $h={18} $active aria-label='Forme'>
        <Icon name='star' />
      </IconButton>
      <IconButton aria-label='Masque'>
        <Icon name='maskMode' />
      </IconButton>
    </ShapeOptions>
    <ToolOptions>
      <HotText>Fond :</HotText>
      <FillColor aria-label='Couleur de fond' />
      <HotText>Contour :</HotText>
      <IconButton $w={28} aria-label='Couleur de contour'>
        <Icon name='noStroke' />
      </IconButton>
      <Gap $w={57} />
      <IconButton $w={62} aria-label='Ajouter'>
        Ajouter :&nbsp;
        <Icon name='playCircle' />
      </IconButton>
      <Spacer />
      <Row $gap={7}>
        <Icon name='gears' />
        Espace de travail :
        <Dropdown label='Espace de travail' value='Standard' w={138} />
        <SearchBox $w={193}>
          <Icon name='loupe' />
          <input aria-label="Rechercher dans l'aide" placeholder="Rechercher dans l'aide" />
        </SearchBox>
      </Row>
    </ToolOptions>
  </Toolbar>
);

const Upper = styled.div`
  display: grid;
  grid-template-columns: 356px minmax(0, 1fr) 239px;
  gap: 4px;
  flex: 1;
  min-height: 0;
`;

/* ---------- project panel ---------- */

const Summary = styled.div`
  display: flex;
  gap: 5px;
  height: 113px;
  padding: 5px 4px 0;
`;

const Thumb = styled.div`
  width: 114px;
  height: 65px;
  margin-top: 2px;
  background: #000;
`;

const ItemTitle = styled.div`
  display: flex;
  align-items: center;
  gap: 3px;
  font-weight: bold;
`;

const SearchRow = styled.div`
  display: flex;
  padding: 0 7px 8px 5px;
`;

const ItemArea = styled.div`
  display: flex;
  align-items: flex-start;
  flex: 1;
  min-height: 0;
  border-top: 1px solid #1a1a1a;
`;

const ItemTable = styled.table`
  flex: 1;
  width: 100%;
  table-layout: fixed;
  border-collapse: collapse;

  & th {
    height: 19px;
    padding: 0;
    background: linear-gradient(#4e4e4e, #424242);
    border-bottom: 1px solid #111;
    font-size: 10px;
    text-align: left;
    white-space: nowrap;
    overflow: hidden;
  }

  & td {
    height: 19px;
    padding: 0 0 0 6px;
    background: #4a4a4a;
    border-bottom: 1px solid #333;
  }
`;

const HeadCell = styled.div`
  display: flex;
  align-items: center;
  justify-content: space-between;
  height: 11px;
  padding: 0 3px 0 ${(props) => props.$pad || 5}px;
  border-left: 1px solid #222;
  color: #bcbcbc;
`;

const NameBox = styled.div`
  display: flex;
  align-items: center;
  gap: 2px;
  margin-left: -5px;
`;

const SelectedName = styled.div`
  display: flex;
  align-items: center;
  flex: 1;
  height: ${(props) => props.$h || 18}px;
  padding-left: 3px;
  background: #b4b4b4;
  color: #1e1e1e;
  font-weight: bold;
`;

const VScroll = styled.div`
  display: flex;
  flex-direction: column;
  align-items: center;
  justify-content: space-between;
  flex: 1;
  width: 16px;
  padding: 5px 0;
  background: #363636;
  border: 1px solid #1a1a1a;
  color: #6a6a6a;
`;

const ItemSide = styled.div`
  display: flex;
  flex-direction: column;
  align-items: flex-end;
  align-self: stretch;
  gap: 2px;
  flex: none;
  width: 24px;
  background: linear-gradient(#4a4a4a, #4a4a4a) 0 19px / 7px 19px no-repeat;

  & > svg {
    margin-right: 2px;
  }
`;

const TailHead = styled.div`
  display: flex;
  align-items: center;
  width: 24px;
  height: 19px;
  background: linear-gradient(#4e4e4e, #424242);
  border-bottom: 1px solid #111;
  font-size: 10px;
  font-weight: bold;
  overflow: hidden;
`;

const ProjectFoot = styled.div`
  display: flex;
  align-items: center;
  flex: none;
  height: 17px;
  padding-left: 3px;
  border-top: 1px solid #1a1a1a;
`;

const ScrollTrack = styled.div`
  display: flex;
  align-items: center;
  justify-content: space-between;
  flex: 1;
  height: 17px;
  padding: 0 5px;
  background: #383838;
  border: 1px solid #1a1a1a;
  color: ${(props) => props.$color || '#c0c0c0'};
`;

const ScrollThumb = styled.span`
  width: 51px;
  height: 17px;
  margin: 0 auto 0 8px;
  background: linear-gradient(#505050, #404040);
  border: 1px solid #1a1a1a;
`;

const ProjectPanel = () => (
  <Panel>
    <TabBar>
      <Tab $active $w={55}>
        <Grip />
        Projet
        <CloseButton />
      </Tab>
      <Tab $w={155} $pad={12} $gap={25}>
        <Swatch $color='#6a7fdc' />
        Effets Solide
      </Tab>
      <PanelMenu />
    </TabBar>
    <Summary>
      <Thumb />
      <div>
        <ItemTitle>
          Composition 1 <Icon name='down' />
        </ItemTitle>
        <div>1920 x 1080&nbsp; (480 x 270) (1,00)</div>
        <div>Δ 0:00:12:00, 25,00 ips</div>
      </div>
    </Summary>
    <SearchRow>
      <SearchBox>
        <Icon name='loupe' />
        <Icon name='down' />
        <input aria-label='Rechercher dans le projet' />
      </SearchBox>
    </SearchRow>
    <ItemArea>
      <ItemTable>
        <colgroup>
          <col width='14' />
          <col width='117' />
          <col width='102' />
          <col width='21' />
          <col />
        </colgroup>
        <thead>
          <tr>
            <th />
            <th><HeadCell>Nom</HeadCell></th>
            <th>
              <HeadCell>
                Commentaire <Icon name='sort' />
              </HeadCell>
            </th>
            <th><HeadCell $pad={2}><Icon name='tag' /></HeadCell></th>
            <th><HeadCell>Type</HeadCell></th>
          </tr>
        </thead>
        <tbody>
          <tr>
            <td />
            <td>
              <NameBox>
                <Icon name='comp' />
                <SelectedName>Composition 1</SelectedName>
              </NameBox>
            </td>
            <td />
            <td><Row><Swatch $color='#ab9778' $framed /></Row></td>
            <td>Composition</td>
          </tr>
        </tbody>
      </ItemTable>
      <ItemSide>
        <TailHead><HeadCell>Taill</HeadCell></TailHead>
        <Icon name='tree' />
        <VScroll>
          <Icon name='up' />
          <Icon name='down' />
        </VScroll>
      </ItemSide>
    </ItemArea>
    <ProjectFoot>
      <Row $gap={9}>
        <Icon name='footage' />
        <Icon name='folder' />
        <Icon name='newComp' />
        8 bpc
      </Row>
      <Gap $w={17} />
      <IconButton $w={12} aria-label='Supprimer'>
        <Icon name='trash' />
      </IconButton>
      <Gap $w={8} />
      <ScrollTrack>
        <Icon name='left' />
        <ScrollThumb />
        <Icon name='right' />
      </ScrollTrack>
      <Gap $w={17} />
    </ProjectFoot>
  </Panel>
);

/* ---------- composition viewer ---------- */

const CrumbBar = styled.div`
  flex: none;
  height: 26px;
  padding: 4px 0 0 19px;
  border-bottom: 1px solid #222;
`;

const Crumb = styled.button`
  display: block;
  height: 16px;
  padding: 0 8px;
  background: #343434;
  border: 1px solid #111;
  box-shadow: 0 0 0 1px #4a4a4a;
`;

const Stage = styled.div`
  display: flex;
  justify-content: center;
  flex: 1;
  min-height: 0;
  padding: 4px 0 5px;
`;

const Canvas = styled.div`
  position: relative;
  height: 100%;
  aspect-ratio: 1665 / 936;
  background: #000;
`;

const Solid = styled.div`
  position: absolute;
  left: 36.700%;
  top: 35.300%;
  width: 27.200%;
  height: 29.100%;
  background: #fff;
  border: 1px solid #6a7fdc;
  box-shadow: -2px 1px 0 #55555f;
`;

const Handle = styled.span`
  position: absolute;
  left: ${(props) => props.$x}%;
  top: ${(props) => props.$y}%;
  width: 8px;
  height: 8px;
  margin: -4px;
  background: #6a7fdc;
`;

const Anchor = styled.span`
  position: absolute;
  left: 49.300%;
  top: 51%;
  margin: -6px;
`;

const ViewerFoot = styled.div`
  display: flex;
  align-items: center;
  gap: 2px;
  flex: none;
  height: 23px;
  padding-left: 2px;
  border-top: 1px solid #222;
`;

const TimeBox = styled.button`
  width: 68px;
  height: 17px;
  border: 1px solid #1a1a1a;
  box-shadow: 0 0 0 1px #505050;
`;

const handles = [
  [0, 0], [50, 0], [100, 0],
  [0, 50], [100, 50],
  [0, 100], [50, 100], [100, 100],
];

const ViewerPanel = () => (
  <Panel>
    <TabBar>
      <Tab $active $w={245}>
        <Grip />
        <Swatch $color='#ab9778' />
        <IconButton $w={12} $h={14} aria-label='Verrouiller'>
          <Icon name='lock' />
        </IconButton>
        <Dropdown label='Composition' value='Composition : Composition 1' w={191} />
        <CloseButton />
      </Tab>
      <Tab $w={162} $pad={34}>Calque : (aucun)</Tab>
      <PanelMenu />
    </TabBar>
    <CrumbBar>
      <Crumb>Composition 1</Crumb>
    </CrumbBar>
    <Stage>
      <Canvas>
        <Solid>
          {handles.map(([x, y]) => (
            <Handle key={`${x}-${y}`} $x={x} $y={y} />
          ))}
          <Anchor>
            <svg width='13' height='13' viewBox='0 0 13 13' aria-hidden='true'>
              <path d='M6.500 0V13M0 6.500H13' stroke='#7d88b8' />
              <rect x='4' y='4' width='5' height='5' fill='#fff' stroke='#5d6aa5' transform='rotate(45 6.500 6.500)' />
              <path d='M6.500 4.500V8.500M4.500 6.500H8.500' stroke='#aab3d8' />
            </svg>
          </Anchor>
        </Solid>
      </Canvas>
    </Stage>
    <ViewerFoot>
      <IconButton $w={18} aria-label='Toujours afficher'><Icon name='magFit' /></IconButton>
      <Dropdown label='Zoom' value='(86,8...' w={68} />
      <IconButton $w={20} aria-label='Grilles'><Icon name='guides' /></IconButton>
      <IconButton $w={20} $active aria-label='Masques'><Icon name='maskView' /></IconButton>
      <TimeBox>0:00:00:00</TimeBox>
      <IconButton $w={20} aria-label='Instantané'><Icon name='snapshot' /></IconButton>
      <IconButton $w={22} aria-label='Afficher instantané'><Icon name='person' /></IconButton>
      <IconButton $w={18} aria-label='Couches'><Icon name='rgb' /></IconButton>
      <Dropdown label='Résolution' value='Un quart' w={88} />
      <IconButton $w={20} aria-label="Zone d'intérêt"><Icon name='roi' /></IconButton>
      <IconButton $w={20} aria-label='Transparence'><Icon name='checker' /></IconButton>
      <Dropdown label='Vue 3D' value='Caméra active' w={108} />
      <Dropdown label='Disposition' value='1 vue' w={69} />
      <IconButton $w={20} aria-label='Format de pixel'><Icon name='aspect' /></IconButton>
      <IconButton $w={20} aria-label='Aperçus rapides'><Icon name='fast' /></IconButton>
      <IconButton $w={20} aria-label='Montage'><Icon name='timelineIcon' /></IconButton>
      <IconButton $w={20} aria-label='Organigramme'><Icon name='tree' /></IconButton>
      <TabSplit />
      <IconButton $w={18} aria-label='Exposition'><Icon name='exposure' /></IconButton>
      <HotText>+0,0</HotText>
    </ViewerFoot>
  </Panel>
);

/* ---------- right column ---------- */

const SideStack = styled.div`
  display: grid;
  grid-template-rows: 135px minmax(0, 1fr);
  gap: 4px;
`;

const InfoBody = styled.div`
  display: flex;
  height: 64px;
  margin: 0 9px 0 6px;
  padding: 5px 0 0 2px;
  border-bottom: 1px solid #222;
`;

const InfoColor = styled.div`
  width: 20px;
  height: 20px;
  margin: 13px 5px 0 0;
  background: #000;
  border: 1px solid #2a2a2a;
`;

const Channels = styled.div`
  width: 69px;
  height: 52px;
  border-right: 1px solid #222;
`;

const Cursor = styled.div`
  display: flex;
  gap: 6px;
  padding-left: 6px;
  text-align: right;

  & svg {
    margin-top: 21px;
  }
`;

const PreviewBody = styled.div`
  display: flex;
  flex-direction: column;
  align-items: flex-start;
  padding-left: 2px;
`;

const Transport = styled.div`
  display: flex;
  margin: 9px 0 7px 4px;
`;

const Fields = styled.div`
  display: grid;
  grid-template-columns: auto auto auto;
  gap: 2px 6px;
  padding: 6px 0 6px 5px;

  & label {
    line-height: 14px;
  }
`;

const Check = styled.label`
  display: flex;
  align-items: center;
  gap: 4px;

  & input {
    width: 12px;
    height: 12px;
    appearance: none;
    background: #4a4a4a;
    border: 1px solid #1a1a1a;
    box-shadow: 0 1px #555;
  }
`;

const InfoPanel = () => (
  <Panel>
    <TabBar>
      <Tab $active $w={46}>
        <Grip />
        Info
        <CloseButton />
      </Tab>
      <Tab $w={59} $pad={12}>Audio</Tab>
      <PanelMenu />
    </TabBar>
    <InfoBody>
      <InfoColor />
      <Channels>
        <div>R :</div>
        <div>V :</div>
        <div>B :</div>
        <div>A : 0</div>
      </Channels>
      <Cursor>
        <svg width='9' height='9' viewBox='0 0 9 9' aria-hidden='true'>
          <path d='M4.500 0V9M0 4.500H9' stroke='#ddd' />
        </svg>
        <div>
          <div>X : 2071</div>
          <div>Y : 839&nbsp;</div>
        </div>
      </Cursor>
    </InfoBody>
  </Panel>
);

const PreviewPanel = () => (
  <Panel>
    <TabBar>
      <Tab $active $w={110}>
        <Grip />
        Prévisualisation
        <CloseButton />
      </Tab>
      <PanelMenu />
    </TabBar>
    <PreviewBody>
      <Transport>
        {['first', 'prev', 'play', 'next', 'last'].map((name) => (
          <IconButton key={name} $w={24} $h={12} aria-label={name}>
            <Icon name={name} />
          </IconButton>
        ))}
        {['speaker', 'loop', 'ram'].map((name) => (
          <IconButton key={name} $w={27} $h={12} aria-label={name}>
            <Icon name={name} />
          </IconButton>
        ))}
      </Transport>
      <HairLine $w={196} $m='0 0 4px 4px' />
      <Dropdown label='Options' value='Options de prévisualisation RAM' w={209} />
      <Fields>
        <label htmlFor='cadence'>Cadence</label>
        <label htmlFor='ignorer'>Ignorer</label>
        <label>Résolution</label>
        <ComboBox $w={64}>
          <input id='cadence' defaultValue='(25)' />
          <IconButton $w={17} $h={15} aria-label='Choisir la cadence'><Icon name='down' /></IconButton>
        </ComboBox>
        <ComboBox $w={41}>
          <input id='ignorer' defaultValue='0' />
          <IconButton $w={17} $h={15} aria-label='Choisir ignorer'><Icon name='down' /></IconButton>
        </ComboBox>
        <Dropdown label='Résolution' value='Autom...' w={79} />
      </Fields>
      <Row $gap={4}>
        <Check>
          <input type='checkbox' />
          Depuis cet instant
        </Check>
        <Check>
          <input type='checkbox' />
          Ecran entier
        </Check>
      </Row>
    </PreviewBody>
  </Panel>
);

/* ---------- timeline ---------- */

const Lower = styled.div`
  display: grid;
  grid-template-columns: minmax(0, 1fr) 626px;
  gap: 4px;
  flex: none;
  height: 350px;
  margin-top: 5px;
`;

const TimelineBody = styled.div`
  display: grid;
  grid-template-columns: 540px minmax(0, 1fr) 18px;
  flex: 1;
  min-height: 0;
`;

const TimelineTools = styled.div`
  display: flex;
  align-items: center;
  flex: none;
  height: 37px;
  padding-left: 9px;
`;

const TimeReadout = styled.div`
  display: flex;
  flex-direction: column;
  align-items: center;
  gap: 1px;
  width: 88px;
  margin-right: 11px;
  color: #dba32e;
  white-space: nowrap;
`;

const BigTime = styled.button`
  border-bottom: 1px dotted #dba32e;
  font-size: 16px;
  font-weight: bold;
  line-height: 15px;
`;

const TimelineIcons = styled.div`
  display: flex;
  gap: 16px;
  margin-left: 11px;
`;

const layerColumns = '67px 31px 22px 204px 1fr';

const LayerHead = styled.div`
  display: grid;
  grid-template-columns: ${layerColumns};
  align-items: center;
  flex: none;
  height: 20px;
  padding-right: 16px;
  background: linear-gradient(#4e4e4e, #424242);
  border-top: 1px solid #111;
  border-bottom: 1px solid #111;
  color: #bcbcbc;
  font-size: 10px;
  font-weight: bold;
`;

const LayerHeadCell = styled.div`
  display: flex;
  align-items: center;
  gap: ${(props) => props.$gap || 4}px;
  height: 12px;
  padding-left: ${(props) => props.$pad || 5}px;
  border-right: 1px solid #222;
`;

const ModeHead = styled.span`
  width: 87px;
`;

const LayerRow = styled.div`
  display: grid;
  grid-template-columns: ${layerColumns};
  align-items: center;
  flex: none;
  height: 17px;
  background: ${(props) => (props.$selected ? '#4b4b4b' : 'none')};
  border-bottom: 1px solid #353535;
`;

const Switches = styled.div`
  display: grid;
  grid-template-columns: 14px 14px 14px 14px;
  gap: 1px;
  padding-left: 4px;
`;

const SwitchBox = styled.button`
  display: flex;
  align-items: center;
  justify-content: center;
  width: 14px;
  height: 15px;
  background: #464646;
  border: 1px solid #333;
  border-bottom-color: #888;
`;

const LayerLabel = styled.div`
  display: flex;
  align-items: center;
  gap: 5px;
  padding-left: 4px;
`;

const LayerNumber = styled.div`
  padding-left: 8px;
  font-weight: bold;
`;

const LayerName = styled.div`
  display: flex;
  align-items: center;
  gap: 4px;
  height: 16px;
  padding-left: 4px;
`;

const ModeCell = styled.div`
  display: flex;
  align-items: center;
  gap: 5px;
  padding-left: 4px;
`;

const PropName = styled.div`
  display: flex;
  align-items: center;
  grid-column: 2 / 5;
  gap: 10px;
  padding-left: ${(props) => props.$pad}px;
`;

const PropValue = styled.div`
  display: flex;
  align-items: center;
  gap: 4px;
  grid-column: 5;
  justify-content: ${(props) => (props.$end ? 'flex-end' : 'flex-start')};
  padding: 0 22px 0 6px;
`;

const LayersPane = styled.div`
  display: flex;
  flex-direction: column;
`;

const PaneFoot = styled.div`
  display: flex;
  align-items: center;
  gap: 5px;
  height: 18px;
  margin-top: auto;
  padding: 0 18px 0 4px;
  border-top: 1px solid #1c1c1c;
`;

const OptionsButton = styled.button`
  width: 196px;
  height: 14px;
  margin-left: auto;
  background: linear-gradient(#4f4f4f, #3f3f3f);
  border: 1px solid #171717;
  line-height: 12px;
`;

const TimePane = styled.div`
  position: relative;
  display: flex;
  flex-direction: column;
  padding-top: 5px;
  border-left: 1px solid #1c1c1c;
  border-right: 1px solid #1c1c1c;
  overflow: hidden;
`;

const RangeBar = styled.div`
  display: flex;
  justify-content: space-between;
  flex: none;
  height: ${(props) => props.$h}px;
  background: #7a7a7a;
  border-top: 1px solid #111;
  border-bottom: 1px solid #111;
`;

const RangeEnd = styled.span`
  width: 7px;
  background: repeating-linear-gradient(90deg, #5f4510 0 1px, #c4922a 1px 3px);
  border: 1px solid #2b2008;
`;

const Ruler = styled.div`
  display: flex;
  align-items: flex-end;
  justify-content: space-between;
  flex: none;
  height: 20px;
  padding: 0 6px 0 7px;
  color: #b0b0b0;
  font-size: 11px;
`;

const Second = styled.div`
  display: flex;
  flex-direction: column;
  align-items: ${(props) => (props.$first ? 'flex-start' : 'center')};
  width: 0;

  &::after {
    content: '';
    width: 1px;
    height: 5px;
    margin-top: 1px;
    background: #b8b8b8;
  }
`;

const CacheBar = styled.div`
  flex: none;
  height: 5px;
  margin: 0 7px 0 6px;
  background: #36ae3c;
  border-bottom: 1px solid #111;
`;

const Tracks = styled.div`
  flex: 1;
  background: linear-gradient(270deg, #444 7px, #4d4d4d 7px);
`;

const Track = styled.div`
  display: flex;
  align-items: center;
  height: 17px;
  padding-left: ${(props) => (props.$clip ? 7 : 3)}px;
  background: ${(props) => (props.$clip ? '#585858' : 'none')};
  border-bottom: 1px solid #383838;
`;

const Clip = styled.span`
  width: 4px;
  height: 15px;
  background: #7d8bd8;
`;

const Playhead = styled.div`
  position: absolute;
  left: 0;
  top: 19px;
  bottom: 18px;
  width: 12px;

  &::before {
    content: '';
    position: absolute;
    left: 6px;
    top: 10px;
    bottom: 0;
    width: 1px;
    background: #d4202e;
    box-shadow: 1px 0 rgba(212, 32, 46, 0.35);
  }

  & svg {
    position: relative;
  }
`;

const TimeFoot = styled.div`
  display: flex;
  align-items: center;
  flex: none;
  gap: 12px;
  height: 18px;
  padding-left: 5px;
  border-top: 1px solid #1c1c1c;
  background: #404040;
`;

const ZoomSlider = styled.input`
  width: 47px;
  height: 10px;
  appearance: none;

  &::-webkit-slider-runnable-track {
    height: 4px;
    border: 1px solid #111;
    background: #4a4a4a;
  }

  &::-webkit-slider-thumb {
    appearance: none;
    width: 7px;
    height: 9px;
    margin-top: -4px;
    background: #666;
    border: 1px solid #151515;
    border-radius: 4px 4px 0 0;
  }
`;

const TimeSide = styled.div`
  display: flex;
  flex-direction: column;
  align-items: center;
  gap: 6px;
  padding: 37px 0 19px;
`;

const seconds = Array.from({ length: 13 }, (_, i) => `${String(i).padStart(2, '0')}s`);

const TimelinePanel = () => (
  <Panel>
    <TabBar>
      <Tab $w={146} $pad={9}>{"File d'attente de rendu"}</Tab>
      <Tab $active $w={119}>
        <Grip />
        <Gap $w={1} />
        <Swatch $color='#ab9778' />
        Composition 1
        <CloseButton />
      </Tab>
      <PanelMenu />
    </TabBar>
    <TimelineBody>
      <LayersPane>
        <TimelineTools>
          <TimeReadout>
            <BigTime>0:00:00:00</BigTime>
            00000 (25.00 ips)
          </TimeReadout>
          <SearchBox $w={177}>
            <Icon name='loupe' />
            <Icon name='down' />
            <input aria-label='Rechercher un calque' />
          </SearchBox>
          <TimelineIcons>
            <Row $gap={12}>
              <Icon name='flowchart' />
              <Icon name='draft3d' />
            </Row>
            <Row $gap={8}>
              <Icon name='shy' />
              <Icon name='blend' />
              <Icon name='blur' />
            </Row>
            <Row $gap={9}>
              <Icon name='brain' />
              <Icon name='stopwatch' />
              <Icon name='graph' />
            </Row>
          </TimelineIcons>
        </TimelineTools>
        <LayerHead>
          <LayerHeadCell $pad={3} $gap={2}>
            <Icon name='eye' />
            <Icon name='speaker' />
            <Gap />
            <Icon name='dot' />
            <Gap />
            <Icon name='padlock' />
          </LayerHeadCell>
          <LayerHeadCell $pad={13}><Icon name='tag' /></LayerHeadCell>
          <LayerHeadCell>N°</LayerHeadCell>
          <LayerHeadCell>Nom des calques</LayerHeadCell>
          <LayerHeadCell>
            <ModeHead>Mode</ModeHead>
            <span>T</span>
            <Gap $w={4} />
            Cache
          </LayerHeadCell>
        </LayerHead>
        <LayerRow $selected>
          <Switches>
            <SwitchBox aria-label='Visible'><Icon name='eye' /></SwitchBox>
            <span />
            <SwitchBox aria-label='Solo' />
            <SwitchBox aria-label='Verrou' />
          </Switches>
          <LayerLabel>
            <Icon name='twirlOpen' />
            <Swatch $color='#6a7fdc' $framed $size={12} />
          </LayerLabel>
          <LayerNumber>1</LayerNumber>
          <LayerName>
            <Icon name='starSmall' />
            <SelectedName $h={16}>Solide</SelectedName>
          </LayerName>
          <ModeCell>
            <Dropdown label='Mode' value='Normal' w={84} h={15} />
            <SwitchBox aria-label='T' />
          </ModeCell>
        </LayerRow>
        <LayerRow>
          <Switches />
          <PropName $pad={21}>
            <Icon name='twirlOpen' />
            Contenu
          </PropName>
          <PropValue $end>
            Ajouter : <Icon name='playCircle' />
          </PropValue>
        </LayerRow>
        <LayerRow>
          <Switches>
            <SwitchBox aria-label='Visible'><Icon name='eye' /></SwitchBox>
          </Switches>
          <PropName $pad={39}>
            <Icon name='twirl' />
            Rectangle 1
          </PropName>
          <PropValue>
            <Dropdown label='Mode du rectangle' value='Normal' w={188} h={15} />
          </PropValue>
        </LayerRow>
        <LayerRow>
          <Switches />
          <PropName $pad={22}>
            <Icon name='twirl' />
            Transformer
          </PropName>
          <PropValue>
            <HotText>Réinit.</HotText>
          </PropValue>
        </LayerRow>
        <PaneFoot>
          <Icon name='layersSwitch' />
          <IconButton $w={15} $h={16} $active aria-label='Modes'>
            <Icon name='modesSwitch' />
          </IconButton>
          <Icon name='braces' />
          <OptionsButton>Options/modes</OptionsButton>
        </PaneFoot>
      </LayersPane>
      <TimePane>
        <RangeBar $h={11}>
          <RangeEnd />
          <RangeEnd />
        </RangeBar>
        <Ruler>
          {seconds.map((s, i) => (
            <Second key={s} $first={i === 0}>{s}</Second>
          ))}
        </Ruler>
        <RangeBar $h={16}>
          <RangeEnd />
          <RangeEnd />
        </RangeBar>
        <CacheBar />
        <Tracks>
          <Track $clip><Clip /></Track>
          <Track><Icon name='ibeam' /></Track>
          <Track><Icon name='ibeam' /></Track>
          <Track><Icon name='ibeam' /></Track>
        </Tracks>
        <TimeFoot>
          <Icon name='hillSmall' />
          <ZoomSlider type='range' min='0' max='100' defaultValue='0' aria-label='Zoom du montage' />
          <Icon name='hillBig' />
          <ScrollTrack $color='#6a6a6a'>
            <Icon name='left' />
            <Icon name='right' />
          </ScrollTrack>
        </TimeFoot>
        <Playhead>
          <svg width='12' height='14' viewBox='0 0 12 14' aria-hidden='true'>
            <path d='M1 3Q1 1 3 1H9Q11 1 11 3V7L6 13L1 7Z' fill='#e0a52c' stroke='#7c5a14' />
            <path d='M3.500 3V6M6 3V7M8.500 3V6' stroke='#5f4510' />
          </svg>
        </Playhead>
      </TimePane>
      <TimeSide>
        <Icon name='marker' />
        <Icon name='compButton' />
        <VScroll>
          <Icon name='up' />
          <Icon name='down' />
        </VScroll>
      </TimeSide>
    </TimelineBody>
  </Panel>
);

/* ---------- align panel ---------- */

const AlignSection = styled.div`
  display: flex;
  flex-direction: column;
  align-items: flex-start;
  gap: ${(props) => props.$gap}px;
  padding: ${(props) => props.$top}px 6px 0;
`;

const AlignRow = styled.div`
  display: flex;
  gap: 16px;
  padding-left: 6px;
`;

const AlignButtons = ({ shapes }) => (
  <AlignRow>
    {Object.keys(shapes).map((name) => (
      <IconButton key={name} $w={18} $h={15} aria-label={name}>
        <svg width='18' height='15' viewBox='0 0 18 15' aria-hidden='true'>
          {shapes[name]}
        </svg>
      </IconButton>
    ))}
  </AlignRow>
);

const AlignPanel = () => (
  <Panel>
    <TabBar>
      <Tab $active $w={65}>
        <Grip />
        Aligner
        <CloseButton />
      </Tab>
      <Tab $w={157} $pad={11}>Interpolation de masque</Tab>
      <Tab $w={51} $pad={11}>Suivi</Tab>
      <Tab $w={86} $pad={11}>Paragraphe</Tab>
      <PanelMenu />
    </TabBar>
    <AlignSection $gap={6} $top={7}>
      <div>Aligner les calques sur :</div>
      <Dropdown label='Aligner les calques sur' value='Composition' w={109} />
      <AlignButtons shapes={alignShapes} />
    </AlignSection>
    <AlignSection $gap={4} $top={5}>
      <HairLine $w={196} />
      <div>Répartir les calques :</div>
      <AlignButtons shapes={spreadShapes} />
    </AlignSection>
  </Panel>
);

const App = () => (
  <>
    <GlobalStyle />
    <Desktop>
      <Window>
        <TitleBar>
          <Row $gap={7}>
            <Light $edited aria-label='Fermer la fenêtre' />
            <Light aria-label='Réduire' />
            <Light aria-label='Agrandir' />
          </Row>
          Projet sans titre *
        </TitleBar>
        <ToolStrip />
        <Upper>
          <ProjectPanel />
          <ViewerPanel />
          <SideStack>
            <InfoPanel />
            <PreviewPanel />
          </SideStack>
        </Upper>
        <Lower>
          <TimelinePanel />
          <AlignPanel />
        </Lower>
      </Window>
    </Desktop>
  </>
);

export default App;
